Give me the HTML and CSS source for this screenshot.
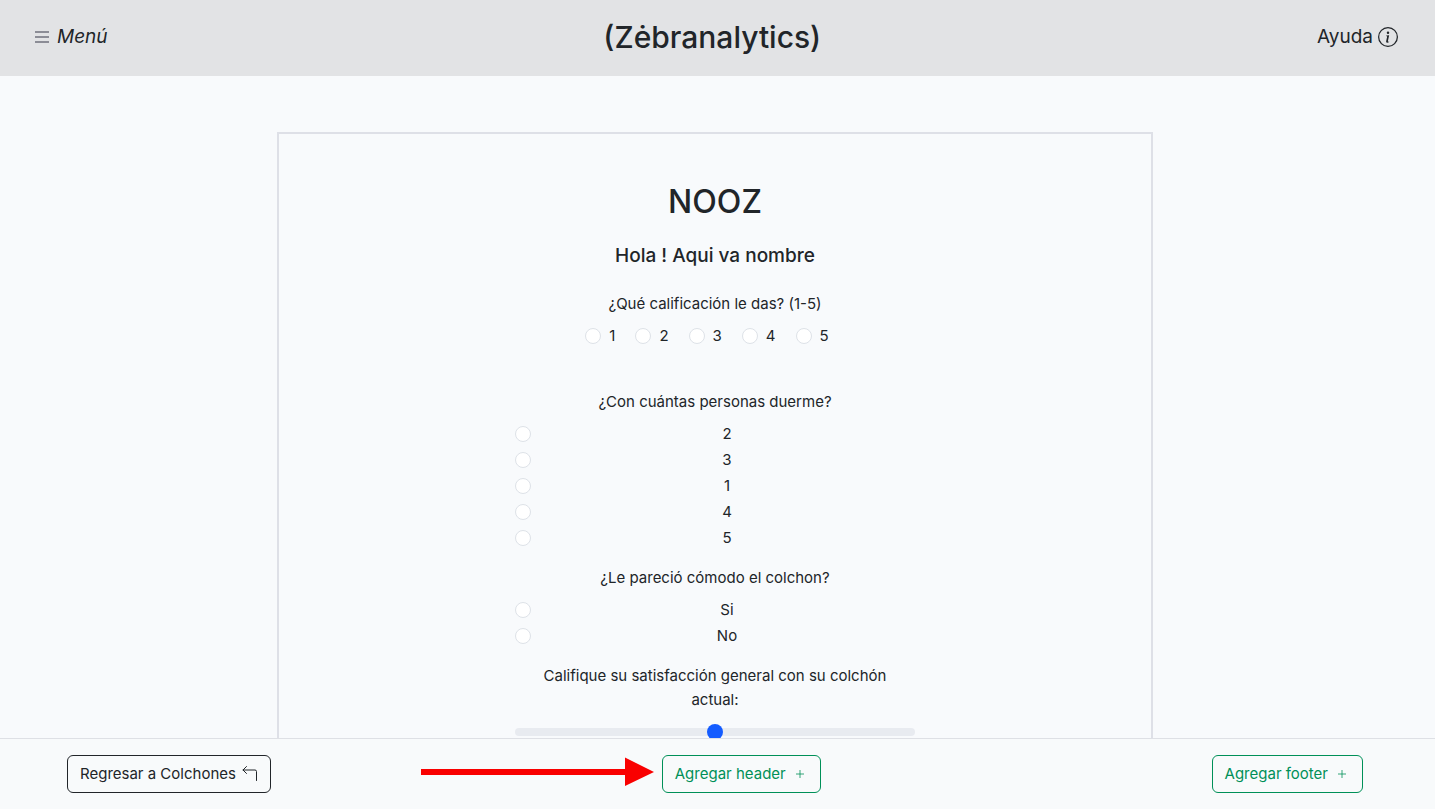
FILE: index.html
```html
<!DOCTYPE html>
<html lang="es">
<head>
<meta charset="utf-8">
<meta name="viewport" content="width=device-width, initial-scale=1">
<title>Zėbranalytics</title>
<link rel="stylesheet" href="styles.css">
</head>
<body>
<div class="app">
  <header class="topbar">
    <button class="topbar-btn menu" type="button">
      <svg class="menu-icon" viewBox="0 0 14 12" aria-hidden="true"><path d="M0 1h14M0 6h14M0 11h14" stroke="#70717c" stroke-width="1.6"/></svg>
      <em>Menú</em>
    </button>
    <h1 class="brand">(Zėbranalytics)</h1>
    <button class="topbar-btn" type="button">
      Ayuda
      <svg class="info-icon" viewBox="0 0 16 16" fill="currentColor" aria-hidden="true"><path d="M8 15A7 7 0 1 1 8 1a7 7 0 0 1 0 14m0 1A8 8 0 1 0 8 0a8 8 0 0 0 0 16"/><path d="m8.930 6.588-2.290.287-.082.380.450.083c.294.070.352.176.288.469l-.738 3.468c-.194.897.105 1.319.808 1.319.545 0 1.178-.252 1.465-.598l.088-.416c-.200.176-.492.246-.686.246-.275 0-.375-.193-.304-.533zM9 4.500a1 1 0 1 1-2 0 1 1 0 0 1 2 0"/></svg>
    </button>
  </header>

  <main class="content">
    <form class="survey">
      <h2 class="survey-title">NOOZ</h2>
      <h3 class="survey-greeting">Hola ! Aqui va nombre</h3>

      <fieldset class="question spaced">
        <legend>¿Qué calificación le das? (1-5)</legend>
        <div class="inline-options">
          <label class="option"><input type="radio" name="rating"><span>1</span></label>
          <label class="option"><input type="radio" name="rating"><span>2</span></label>
          <label class="option"><input type="radio" name="rating"><span>3</span></label>
          <label class="option"><input type="radio" name="rating"><span>4</span></label>
          <label class="option"><input type="radio" name="rating"><span>5</span></label>
        </div>
      </fieldset>

      <fieldset class="question">
        <legend>¿Con cuántas personas duerme?</legend>
        <div class="stacked-options">
          <label class="option"><input type="radio" name="people"><span>2</span></label>
          <label class="option"><input type="radio" name="people"><span>3</span></label>
          <label class="option"><input type="radio" name="people"><span>1</span></label>
          <label class="option"><input type="radio" name="people"><span>4</span></label>
          <label class="option"><input type="radio" name="people"><span>5</span></label>
        </div>
      </fieldset>

      <fieldset class="question">
        <legend>¿Le pareció cómodo el colchon?</legend>
        <div class="stacked-options">
          <label class="option"><input type="radio" name="comfort"><span>Si</span></label>
          <label class="option"><input type="radio" name="comfort"><span>No</span></label>
        </div>
      </fieldset>

      <div class="question">
        <label class="range-label" for="satisfaction">Califique su satisfacción general con su colchón actual:</label>
        <input class="range" id="satisfaction" type="range" min="0" max="10" value="5">
      </div>
    </form>
  </main>

  <footer class="actions">
    <button class="btn btn-dark" type="button">Regresar a Colchones
      <svg class="back-icon" viewBox="0 0 16 16" fill="none" stroke="currentColor" aria-hidden="true"><path d="M4.500 .500 1 4l3.500 3.500M1 4h12a1.500 1.500 0 0 1 1.500 1.500V14.500" stroke-linecap="round" stroke-linejoin="round"/></svg>
    </button>
    <div class="pointed">
      <svg class="arrow" viewBox="0 0 234 30" aria-hidden="true"><path d="M1 12H205V0.500L234 15 205 29V18H1Z" fill="#f90000"/></svg>
      <button class="btn btn-green" type="button">Agregar header
        <svg class="plus-icon" viewBox="0 0 16 16" fill="none" stroke="currentColor" aria-hidden="true"><path d="M8 4v8M4 8h8" stroke-width=".8"/></svg>
      </button>
    </div>
    <button class="btn btn-green" type="button">Agregar footer
      <svg class="plus-icon" viewBox="0 0 16 16" fill="none" stroke="currentColor" aria-hidden="true"><path d="M8 4v8M4 8h8" stroke-width=".8"/></svg>
    </button>
  </footer>
</div>
</body>
</html>
```

FILE: styles.css
```css
*, *::before, *::after { box-sizing: border-box; }

body {
  margin: 0;
  background: #f8fafc;
  color: #212529;
  font-family: Inter, "Liberation Sans", sans-serif;
  font-size: 15px;
  line-height: 24px;
}

button, input { font: inherit; color: inherit; }

.app {
  display: flex;
  flex-direction: column;
  height: 100vh;
}

.topbar {
  display: flex;
  justify-content: space-between;
  align-items: center;
  padding: 17px 37px 19px 35px;
  background: #e2e3e5;
}

.topbar-btn {
  display: flex;
  align-items: center;
  gap: 5px;
  padding: 0;
  border: 0;
  background: none;
  font-size: 19px;
  line-height: 30px;
}

.menu { gap: 8px; }
.menu-icon { width: 14px; height: 12px; }
.info-icon { width: 20px; height: 20px; }

.brand {
  margin: 0;
  font-size: 30px;
  font-weight: 500;
  line-height: 40px;
}

.content {
  flex: 1;
  min-height: 0;
  padding: 56px 5px 56px 0;
  overflow-y: auto;
  scrollbar-width: none;
}

.survey {
  width: 61.25%;
  margin: 0 auto;
  padding: 48px 24px;
  border: 2px solid #dee0e7;
  text-align: center;
}

.survey-title {
  margin: 0 0 22px;
  font-size: 32px;
  font-weight: 500;
  line-height: 40px;
}

.survey-greeting {
  margin: 0 0 24px;
  font-size: 19px;
  font-weight: 500;
  line-height: 24px;
}

.question {
  width: 100%;
  max-width: 400px;
  min-width: 0;
  margin: 0 auto 14px;
  padding: 0;
  border: 0;
}

.spaced { margin-bottom: 42px; }

.question legend,
.range-label {
  display: block;
  width: 100%;
  padding: 0 12px;
  margin-bottom: 8px;
}

.option {
  display: flex;
  align-items: center;
  gap: 8px;
}

.option input {
  appearance: none;
  flex: none;
  width: 16px;
  height: 16px;
  margin: 0;
  border: 1px solid #dee2e8;
  border-radius: 50%;
  background: #fff;
}

.option input:checked { border: 5px solid #145cff; }

.inline-options {
  display: flex;
  justify-content: center;
  gap: 20px;
  padding-right: 16px;
}

.stacked-options .option { margin-bottom: 2px; }
.stacked-options span { flex: 1; }

.range {
  appearance: none;
  display: block;
  width: 100%;
  height: 24px;
  margin: 0;
  background: none;
}

.range::-webkit-slider-runnable-track {
  height: 8px;
  border-radius: 4px;
  background: #e8ebf0;
}

.range::-webkit-slider-thumb {
  appearance: none;
  width: 16px;
  height: 16px;
  margin-top: -4px;
  border-radius: 50%;
  background: #145cff;
}

.actions {
  display: flex;
  justify-content: space-between;
  align-items: center;
  padding: 16px 72px 16px 67px;
  border-top: 1px solid #dee0e5;
  background: #f8fafb;
}

.btn {
  display: flex;
  align-items: center;
  gap: 6px;
  padding: 6px 12px;
  border: 1px solid currentColor;
  border-radius: 6px;
  background: none;
}

.btn-dark { color: #212529; }
.btn-green { color: #009058; }
.back-icon, .plus-icon { width: 16px; height: 16px; }

.pointed { position: relative; }

.arrow {
  position: absolute;
  top: 2px;
  right: calc(100% + 8px);
  width: 234px;
  height: 30px;
}
```
